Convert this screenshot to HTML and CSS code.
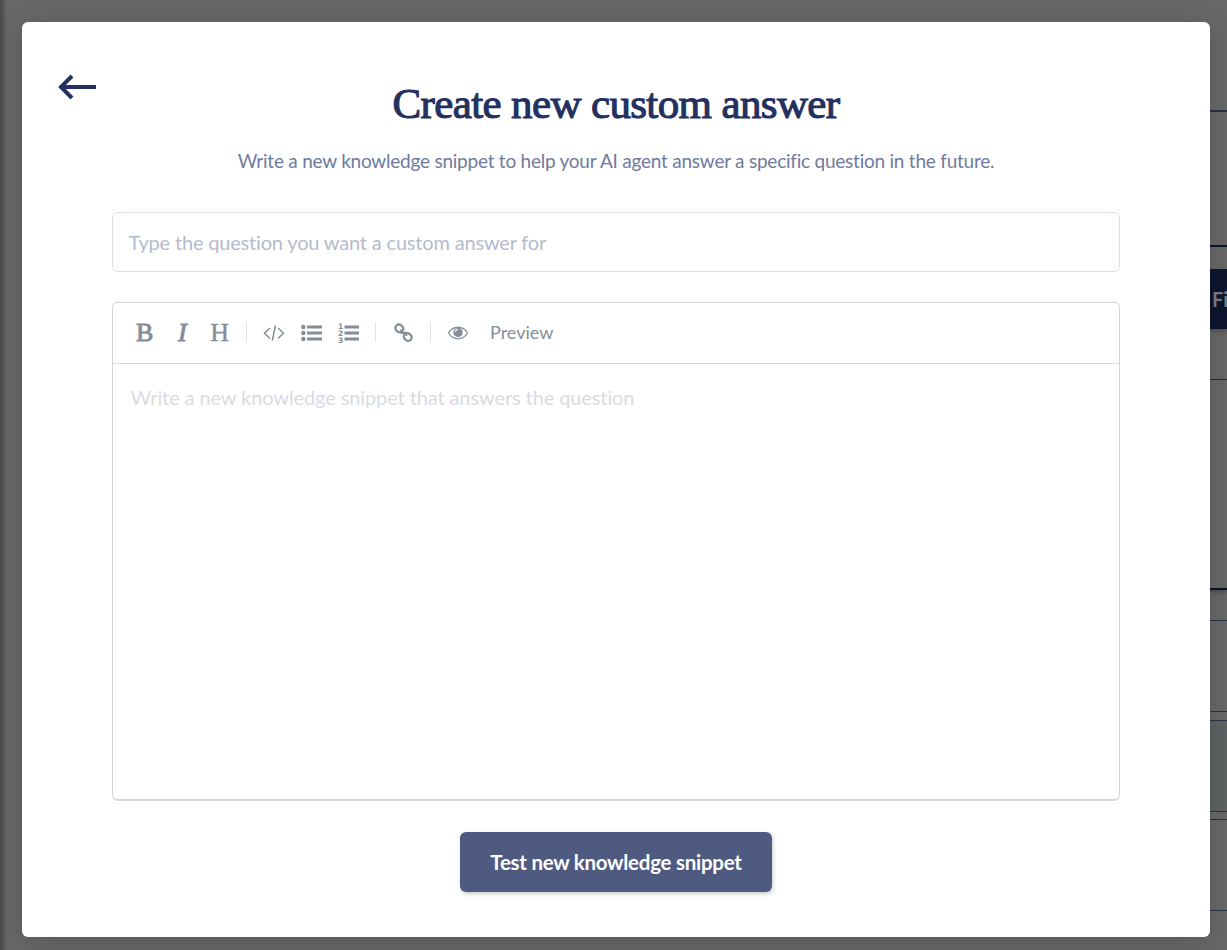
FILE: index.html
```html
<!DOCTYPE html>
<html lang="en">
<head>
<meta charset="utf-8">
<title>Create new custom answer</title>
<link rel="stylesheet" href="styles.css">
</head>
<body>
<div class="page" aria-hidden="true">
  <div class="behind">
    <div class="block header"></div>
    <div class="block filters"></div>
    <div class="find">Fi</div>
    <div class="block panel"></div>
    <div class="block row"></div>
    <div class="block row shaded"></div>
    <div class="block row last"></div>
  </div>
</div>
<main class="modal">
  <button class="back" aria-label="Back"><svg width="40" height="28" viewBox="0 0 40 28"><path d="M39 14H5M15 3L4 14l11 11" fill="none" stroke="#233060" stroke-width="4"/></svg></button>
  <h1 class="title">Create new custom answer</h1>
  <p class="subtitle">Write a new knowledge snippet to help your AI agent answer a specific question in the future.</p>
  <div class="question">Type the question you want a custom answer for</div>
  <section class="editor">
    <div class="toolbar">
      <span class="tool letter bold">B</span>
      <span class="tool letter italic">I</span>
      <span class="tool letter">H</span>
      <span class="sep"></span>
      <span class="tool"><svg width="22" height="18" viewBox="0 0 22 18" fill="none" stroke="#848d99" stroke-width="1.5"><path d="M7 4L1.5 9.2 7 14.5M15 4l5.500 5.200L15 14.500M12.500 1.500L9.300 16.500"/></svg></span>
      <span class="tool"><svg width="22" height="18" viewBox="0 0 22 18" fill="#848d99"><circle cx="3.300" cy="3" r="2.200"/><circle cx="3.300" cy="9" r="2.200"/><circle cx="3.300" cy="15" r="2.200"/><path d="M7 1.600h15v2.800H7zM7 7.600h15v2.800H7zM7 13.600h15v2.800H7z"/></svg></span>
      <span class="tool"><svg width="22" height="22" viewBox="0 0 22 22" fill="#848d99"><path d="M6.500 3.600H21v2.800H6.500zM6.500 9.600H21v2.800H6.500zM6.500 15.600H21v2.800H6.500z"/><text class="digit" x="0" y="6.500">1</text><text class="digit" x="0" y="13.700">2</text><text class="digit" x="0" y="20.800">3</text></svg></span>
      <span class="sep"></span>
      <span class="tool"><svg width="20" height="20" viewBox="0 0 20 20" fill="none" stroke="#848d99" stroke-width="2.200"><rect x="2.300" y="1.900" width="8" height="7" rx="3.200" transform="rotate(40 6.300 5.400)"/><rect x="10.700" y="10.500" width="8" height="7" rx="3.200" transform="rotate(40 14.700 14)"/><path d="M7.500 6.700l1.200 3.400 3.800-.500 1.300 3.200" stroke-width="2"/></svg></span>
      <span class="sep wide"></span>
      <span class="tool"><svg width="22" height="16" viewBox="0 0 22 16"><path d="M1.500 8C6 .3 16 .3 20.500 8 16 15.700 6 15.700 1.500 8z" fill="none" stroke="#848d99" stroke-width="1.300"/><circle cx="11" cy="7.400" r="4.700" fill="#848d99"/><path d="M8.500 6.700c0-1.500 1-2.300 2.300-2.300" fill="none" stroke="#fff" stroke-width="1.200"/></svg></span>
      <span class="preview">Preview</span>
    </div>
    <div class="content">Write a new knowledge snippet that answers the question</div>
  </section>
  <button class="submit">Test new knowledge snippet</button>
</main>
</body>
</html>
```
FILE: styles.css
```css
* { box-sizing: border-box; }
body { margin: 0; font-family: Lato, sans-serif; }
.page {
  width: 1227px; height: 950px; overflow: hidden;
  display: flex; justify-content: flex-end;
  background: linear-gradient(90deg, #484848 0, #686868 7px);
}
.behind { width: 30px; display: flex; flex-direction: column; }
.block { flex: none; }
.header { height: 112px; border-bottom: 2px solid #2a2f45; }
.filters { height: 135px; border-bottom: 2px solid #0e1530; }
.find {
  height: 60px; margin-top: 22px; padding-left: 15px; flex: none;
  background: #0d1530; color: #7c7e84; font-weight: 700; font-size: 20px; line-height: 60px;
  box-shadow: 0 2px 4px #0004; white-space: nowrap; 
}
.panel {
  height: 211px; margin-top: 50px; border-top: 1px solid #2c2c3a; border-bottom: 2px solid #0c1128;
  box-shadow: 0 2px 4px #0004; margin-bottom: 22px;
}
.row { height: 92px; margin-top: 8px; border: solid #2c3247; border-width: 1px 0; }
.last { margin-top: 7px; }
.shaded { background: #606364; }
.modal {
  position: absolute; left: 22px; top: 22px; width: 1188px; height: 915px;
  display: flex; flex-direction: column; align-items: center;
  background: #fff; border-radius: 6px; box-shadow: 0 4px 30px #0000002e;
}
.back {
  align-self: flex-start; height: 28px; margin: 51px 0 0 35px; padding: 0;
  border: 0; background: none;
}
.back svg { display: block; }
.title {
  margin: -27px 0 0; height: 60px; flex: none;
  font: 400 43px/60px "Liberation Serif", serif; letter-spacing: -.63px;
  color: #233060; -webkit-text-stroke: 1.1px #233060; white-space: nowrap;
}
.subtitle {
  margin: 15px 0 0; font-size: 19px; line-height: 24px; letter-spacing: -.235px;
  color: #6f7a9f; white-space: nowrap;
}
.question {
  width: 1008px; height: 60px; margin-top: 39px; padding-left: 15.5px; flex: none;
  border: 1px solid #dcdde8; border-radius: 6px;
  font-size: 20px; line-height: 58px; letter-spacing: -.175px; color: #b5bace;
}
.editor {
  width: 1008px; height: 498px; margin-top: 30px; flex: none;
  border: 1px solid #d4d5d8; border-radius: 5px; box-shadow: 0 1px 0 #dcdcdc;
}
.toolbar {
  display: flex; align-items: center; height: 61px; padding-left: 13px;
  border-bottom: 1px solid #d9dadc; color: #848d99;
}
.tool { width: 37.5px; display: flex; align-items: center; justify-content: center; }
.letter { font: 400 26px/30px "Liberation Serif", serif; -webkit-text-stroke: .4px #848d99; }
.bold { -webkit-text-stroke-width: .9px; }
.italic { font-style: italic; -webkit-text-stroke-width: .9px; }
.digit { font: 700 7.500px "DejaVu Sans", sans-serif; }
.sep { width: 1px; height: 20px; margin: -2px 8px 0 7.500px; background: #dfe1e5; }
.wide { margin-left: 8.500px; }
.preview { margin: -2px 0 0 13.500px; font-size: 18px; }
.content {
  padding: 19px 17.5px; font-size: 20px; line-height: 28px; letter-spacing: -.105px;
  color: #d9dbe3;
}
.submit {
  width: 312px; height: 60px; margin-top: 32px; padding: 0; flex: none;
  border: 0; border-radius: 6px; background: #4f5a80; color: #fff;
  font: 700 20.5px Lato, sans-serif; letter-spacing: -.26px; box-shadow: 1px 2px 4px #0003;
}
```
